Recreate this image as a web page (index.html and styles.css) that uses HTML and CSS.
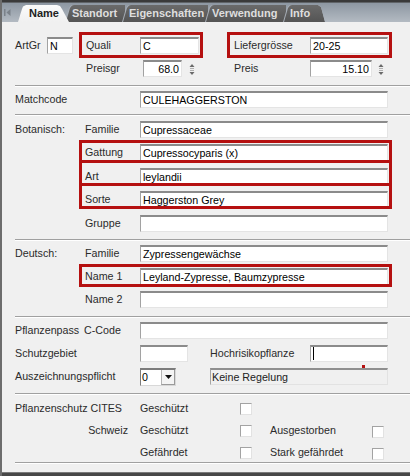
FILE: index.html
```html
<!DOCTYPE html>
<html lang="de">
<head>
<meta charset="utf-8">
<title>Artikel – Name</title>
<link rel="stylesheet" href="styles.css">
</head>
<body>
<div class="window">
  <div class="tabbar">
    <span class="scroll">
      <svg width="7" height="7" viewBox="0 0 7 7"><rect x="0" y="0" width="1.5" height="7" fill="#7b828a"/><polygon points="6.5,0 6.5,7 2.5,3.5" fill="#7b828a"/></svg>
    </span>
    <div class="tab active t-name">Name</div>
    <div class="tab t-standort"><span>Standort</span></div>
    <div class="tab t-eigen"><span>Eigenschaften</span></div>
    <div class="tab t-verw"><span>Verwendung</span></div>
    <div class="tab t-info"><span>Info</span></div>
  </div>

  <div class="content">
    <section class="sec s-top">
      <div class="row">
        <span class="lbl w32">ArtGr</span>
        <span class="in w26">N</span>
        <div class="field fq hl hl-q ml9"><span class="lbl w54">Quali</span><span class="in w59">C</span></div>
        <div class="field fq hl hl-q ml30"><span class="lbl w76">Liefergrösse</span><span class="in w78">20-25</span></div>
      </div>
      <div class="row">
        <span class="lbl ml71 w57">Preisgr</span>
        <span class="in num w39">68.0</span>
        <span class="spin ml5"><svg width="10" height="17" viewBox="0 0 10 17"><polygon points="2.5,7 7.5,7 5,4" fill="#6a6a6a"/><rect x="3" y="8" width="4" height="1" fill="#b0b0b0"/><rect x="3" y="10" width="4" height="1" fill="#b0b0b0"/><polygon points="2.5,12 7.5,12 5,15" fill="#6a6a6a"/></svg></span>
        <span class="lbl ml37 w76">Preis</span>
        <span class="in num w62">15.10</span>
        <span class="spin ml4"><svg width="10" height="17" viewBox="0 0 10 17"><polygon points="2.5,7 7.5,7 5,4" fill="#6a6a6a"/><rect x="3" y="8" width="4" height="1" fill="#b0b0b0"/><rect x="3" y="10" width="4" height="1" fill="#b0b0b0"/><polygon points="2.5,12 7.5,12 5,15" fill="#6a6a6a"/></svg></span>
      </div>
    </section>

    <section class="sec s-match">
      <div class="row">
        <span class="lbl w125">Matchcode</span>
        <span class="in w248">CULEHAGGERSTON</span>
      </div>
    </section>

    <section class="sec s-bot">
      <div class="row">
        <span class="lbl l1">Botanisch:</span>
        <div class="field"><span class="lbl w55">Familie</span><span class="in w248">Cupressaceae</span></div>
      </div>
      <div class="row">
        <span class="lbl l1"></span>
        <div class="field hl"><span class="lbl w55">Gattung</span><span class="in w248">Cupressocyparis (x)</span></div>
      </div>
      <div class="row mt1">
        <span class="lbl l1"></span>
        <div class="field hl hl-art"><span class="lbl w55">Art</span><span class="in w248">leylandii</span></div>
      </div>
      <div class="row">
        <span class="lbl l1"></span>
        <div class="field hl hl-sorte"><span class="lbl w55">Sorte</span><span class="in w248">Haggerston Grey</span></div>
      </div>
      <div class="row mt1">
        <span class="lbl l1"></span>
        <div class="field"><span class="lbl w55">Gruppe</span><span class="in w248"></span></div>
      </div>
    </section>

    <section class="sec s-de">
      <div class="row">
        <span class="lbl l1">Deutsch:</span>
        <div class="field"><span class="lbl w55">Familie</span><span class="in w248">Zypressengewächse</span></div>
      </div>
      <div class="row">
        <span class="lbl l1"></span>
        <div class="field hl"><span class="lbl w55">Name 1</span><span class="in w248">Leyland-Zypresse, Baumzypresse</span></div>
      </div>
      <div class="row">
        <span class="lbl l1"></span>
        <div class="field"><span class="lbl w55">Name 2</span><span class="in w248"></span></div>
      </div>
    </section>

    <section class="sec s-pass">
      <div class="row">
        <span class="lbl l1">Pflanzenpass</span>
        <div class="field fc"><span class="lbl w56">C-Code</span><span class="in w248"></span></div>
      </div>
      <div class="row">
        <span class="lbl w125">Schutzgebiet</span>
        <span class="in w48"></span>
        <span class="lbl ml22 w100">Hochrisikopflanze</span>
        <span class="in w78 marked"><i class="caret"></i><i class="mark"></i></span>
      </div>
      <div class="row">
        <span class="lbl w125">Auszeichnungspflicht</span>
        <span class="select">
          <span class="sv">0</span>
          <span class="sbtn"><svg width="7" height="4" viewBox="0 0 7 4"><polygon points="0,0 7,0 3.5,4" fill="#111"/></svg></span>
        </span>
        <span class="ro ml34">Keine Regelung</span>
      </div>
    </section>

    <section class="sec s-cites">
      <div class="row">
        <span class="lbl w125">Pflanzenschutz CITES</span>
        <span class="lbl w100">Geschützt</span>
        <span class="cb"></span>
      </div>
      <div class="row">
        <span class="lbl w125 right">Schweiz</span>
        <span class="lbl w100">Geschützt</span>
        <span class="cb"></span>
        <span class="lbl ml18 w102">Ausgestorben</span>
        <span class="cb low"></span>
      </div>
      <div class="row">
        <span class="lbl w125"></span>
        <span class="lbl w100">Gefährdet</span>
        <span class="cb"></span>
        <span class="lbl ml18 w102">Stark gefährdet</span>
        <span class="cb low"></span>
      </div>
    </section>

    <section class="sec s-end"></section>
  </div>
  <div class="footer"></div>
</div>
</body>
</html>
```

FILE: styles.css
```css
* { box-sizing: border-box; }

html, body { margin: 0; padding: 0; }

body {
  width: 410px;
  height: 476px;
  overflow: hidden;
  background: #f0f0f0;
  font-family: "Liberation Sans", Arial, sans-serif;
  font-size: 10.7px;
  color: #2b2b2b;
}

.window {
  display: flex;
  flex-direction: column;
  height: 476px;
  border-left: 2px solid #6d6d6d;
}

/* ---------- tab strip ---------- */
.tabbar {
  height: 22px;
  flex: none;
  display: flex;
  align-items: flex-end;
  background: linear-gradient(#3a3a3a 0 2px, #606468 2px 3px, #8d97a2 3px, #b3bac2 100%);
}

.scroll {
  width: 16px;
  height: 22px;
  flex: none;
  display: flex;
  align-items: center;
  padding: 3px 0 0 2px;
}

.tab {
  position: relative;
  height: 17px;
  flex: none;
  line-height: 17px;
  font-size: 11px;
  font-weight: bold;
  white-space: nowrap;
  background: #a7aeb6;
  clip-path: polygon(0 100%, 4px 3px, 6px 0.5px, 8px 0, 100% 0, 100% 100%);
}

.tab span {
  display: block;
  height: 100%;
  margin-left: 1px;
  padding-left: 6px;
  color: #dedede;
  background: linear-gradient(#6a6a6a, #545454);
  clip-path: polygon(0 100%, 4px 3px, 6px 0.5px, 8px 0, 100% 0, 100% 100%);
}

.tab.active {
  z-index: 5;
  width: 51px;
  padding-left: 11px;
  color: #222;
  background: linear-gradient(#fbfbfb, #f0f0f0);
  clip-path: polygon(0 100%, 4px 4px, 5px 1.5px, 8px 0, calc(100% - 12px) 0, calc(100% - 9px) 1px, calc(100% - 7px) 4px, 100% 100%);
}

.t-standort { width: 60px; margin-left: -4px; z-index: 1; }
.t-eigen    { width: 86px; margin-left: -3px; z-index: 2; }
.t-verw     { width: 81px; margin-left: -3px; z-index: 3; }
.t-info, .t-info span {
  clip-path: polygon(0 100%, 4px 3px, 6px 0.5px, 8px 0, calc(100% - 7px) 0, calc(100% - 4px) 2px, 100% 100%);
}
.t-info     { width: 42px; margin-left: -3px; z-index: 4; }

/* ---------- form body ---------- */
.content {
  flex: 1;
  display: flex;
  flex-direction: column;
  padding-left: 13px;
}

.sec {
  display: flex;
  flex-direction: column;
  gap: 6px;
  border-top: 1px solid #a0a0a0;
  box-shadow: inset 0 1px #ffffff;
}

.s-top   { border-top: 0; box-shadow: none; padding: 15px 0 8px; }
.s-match { padding: 5px 0 6px; }
.s-bot   { padding: 6px 0 7px; }
.s-de    { padding: 5px 0 8px; }
.s-pass  { padding: 5px 0 8px; }
.s-cites { padding: 6px 0 1px; gap: 5px; }
.s-end   { flex: 1; }

.footer {
  height: 4px;
  flex: none;
  background: linear-gradient(#7a7a7a 0 1px, #474747 1px);
}

.row {
  display: flex;
  align-items: center;
  height: 17px;
  flex: none;
}
.mt1 { margin-top: 1px; }

.lbl {
  flex: none;
  line-height: 17px;
  white-space: nowrap;
  color: #2b2b2b;
}
.right { text-align: right; padding-right: 12px; }

.field {
  position: relative;
  display: flex;
  align-items: center;
  height: 17px;
  padding: 0 1px 0 3px;
}
.field.fq { padding-left: 4px; }
.field.fc { padding-left: 2px; }

/* red highlight frame over a field */
.hl::after {
  content: "";
  position: absolute;
  left: -3px;
  right: -3px;
  top: -4px;
  bottom: -2px;
  border: 3px solid #b51010;
  pointer-events: none;
}
.hl-q::after     { top: -5px; bottom: -4px; }
.hl-art::after   { top: -8px; bottom: -1px; }
.hl-sorte::after { top: -8px; bottom: -1px; }

/* sunken text box */
.in {
  flex: none;
  height: 17px;
  padding: 0 2px;
  line-height: 14px;
  color: #000;
  white-space: nowrap;
  overflow: hidden;
  background: #fff;
  border-style: solid;
  border-width: 2px 1px 1px 1px;
  border-color: #8b8b8b #e4e4e4 #e4e4e4 #a2a2a2;
}
.in.num { text-align: right; padding-right: 2px; }

.marked { position: relative; overflow: visible; }
.caret {
  display: inline-block;
  width: 1px;
  height: 13px;
  vertical-align: top;
  background: #000;
}
.mark {
  position: absolute;
  left: 51px;
  top: 18px;
  width: 3px;
  height: 3px;
  background: #b51010;
}

.spin { flex: none; width: 10px; height: 17px; display: flex; }

.select {
  flex: none;
  display: flex;
  width: 36px;
  height: 18px;
  background: #fff;
  border-style: solid;
  border-width: 2px 1px 1px 1px;
  border-color: #7c7c7c #d8d8d8 #d8d8d8 #7c7c7c;
}
.sv { flex: 1; padding-left: 1px; line-height: 15px; color: #000; }
.sbtn {
  width: 14px;
  display: flex;
  align-items: center;
  justify-content: center;
  background: #f4f4f4;
  border-left: 1px solid #b4b4b4;
  border-bottom: 1px solid #9a9a9a;
  border-right: 1px solid #9a9a9a;
}

.ro {
  flex: none;
  width: 178px;
  height: 17px;
  padding-left: 1px;
  line-height: 14px;
  color: #222;
  background: #f0f0f0;
  border-style: solid;
  border-width: 2px 1px 1px 1px;
  border-color: #8f8f8f #e2e2e2 #e2e2e2 #a5a5a5;
}

.cb {
  flex: none;
  width: 12px;
  height: 12px;
  background: #fff;
  border: 1px solid;
  border-color: #a3a3a3 #e2e2e2 #e2e2e2 #a3a3a3;
}
.cb.low { margin-top: 2px; }

/* widths and gaps */
.l1   { width: 67px; }
.w26  { width: 26px; }
.w32  { width: 32px; }
.w39  { width: 39px; }
.w48  { width: 48px; }
.w54  { width: 54px; }
.w55  { width: 55px; }
.w56  { width: 56px; }
.w57  { width: 57px; }
.w59  { width: 59px; }
.w62  { width: 62px; }
.w76  { width: 76px; }
.w78  { width: 78px; }
.w100 { width: 100px; }
.w102 { width: 102px; }
.w125 { width: 125px; }
.w248 { width: 248px; }

.ml4  { margin-left: 4px; }
.ml5  { margin-left: 5px; }
.ml9  { margin-left: 9px; }
.ml18 { margin-left: 18px; }
.ml22 { margin-left: 22px; }
.ml30 { margin-left: 30px; }
.ml34 { margin-left: 34px; }
.ml37 { margin-left: 37px; }
.ml71 { margin-left: 71px; }
```
